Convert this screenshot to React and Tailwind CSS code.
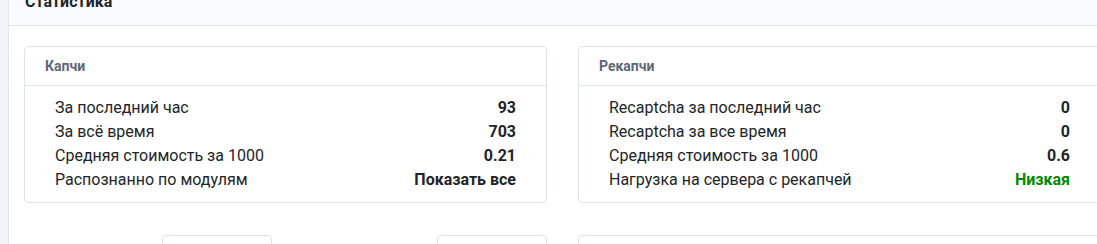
const captcha = [
  { label: "За последний час", value: "93" },
  { label: "За всё время", value: "703" },
  { label: "Средняя стоимость за 1000", value: "0.21" },
  { label: "Распознанно по модулям", value: "Показать все" },
];

const recaptcha = [
  { label: "Recaptcha за последний час", value: "0" },
  { label: "Recaptcha за все время", value: "0" },
  { label: "Средняя стоимость за 1000", value: "0.6" },
  { label: "Нагрузка на сервера с рекапчей", value: "Низкая", green: true },
];

function StatCard({ title, rows }) {
  return (
    <div className="w-[523px] shrink-0 rounded-[4px] border border-[#dfe3ea] bg-white">
      <div className="h-[39px] flex items-center px-[20px] border-b border-[#dfe3ea]">
        <span className="text-[14px] font-bold text-[#5f6675]">{title}</span>
      </div>
      <div className="px-[30px] py-[10px]">
        {rows.map((r) => (
          <div key={r.label} className="h-6 flex items-center justify-between text-[16px] leading-6">
            <span className="text-[#212529]">{r.label}</span>
            <span className={r.green ? "font-bold text-[#008a00]" : "font-bold text-[#212529]"}>
              {r.value}
            </span>
          </div>
        ))}
      </div>
    </div>
  );
}

export default function App() {
  return (
    <div className="h-[244px] w-full overflow-hidden bg-[#f1f3f6] pl-2" style={{ fontFamily: "Roboto, 'Liberation Sans', sans-serif" }}>
      <div className="w-[1120px] -mt-[22px] border-l border-[#e3e6ec] bg-white">
        {/* заголовок блока, верх обрезан прокруткой */}
        <div className="h-[48px] flex items-center px-[16px] bg-[#fafbfe] border-b border-[#e3e6ec]">
          <h2 className="text-[16px] font-bold text-[#212529]">Статистика</h2>
        </div>

        <div className="pl-[15px] pt-[20px]">
          <div className="flex gap-[31px]">
            <StatCard title="Капчи" rows={captcha} />
            <StatCard title="Рекапчи" rows={recaptcha} />
          </div>

          <div className="flex gap-[31px] mt-[32px]">
            <div className="w-[523px] shrink-0 flex">
              <div className="ml-[138px] w-[110px] h-10 rounded-[4px] border border-[#dfe3ea]" />
              <div className="ml-auto w-[110px] h-10 rounded-[4px] border border-[#dfe3ea]" />
            </div>
            <div className="w-[523px] shrink-0 h-10 rounded-[4px] border border-[#dfe3ea]" />
          </div>
        </div>
      </div>
    </div>
  );
}
